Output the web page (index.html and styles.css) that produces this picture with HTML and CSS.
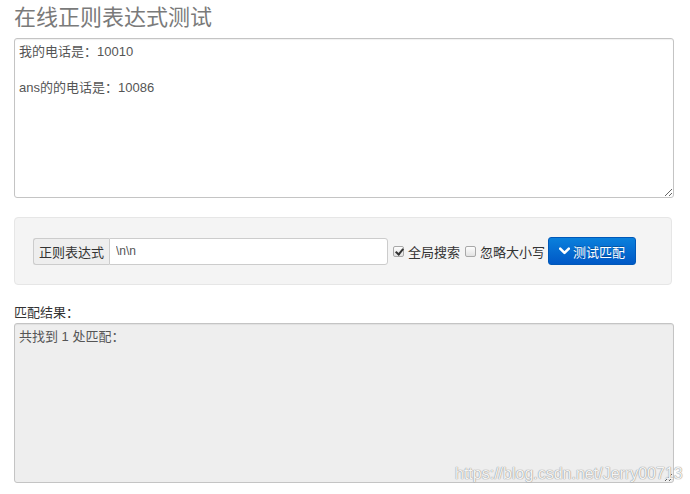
FILE: index.html
```html
<!DOCTYPE html>
<html lang="zh">
<head>
<meta charset="utf-8">
<title>在线正则表达式测试</title>
<link rel="stylesheet" href="styles.css">
</head>
<body>
<div class="page">
  <h1 class="title">在线正则表达式测试</h1>
  <textarea class="source">我的电话是：10010

ans的的电话是：10086</textarea>
  <div class="well">
    <div class="input-group">
      <span class="addon">正则表达式</span>
      <input class="regex" type="text" value="\n\n">
    </div>
    <label class="opt"><span class="cbox checked"></span>全局搜索</label>
    <label class="opt"><span class="cbox"></span>忽略大小写</label>
    <button class="btn" type="button"><svg class="chev" width="11" height="8" viewBox="0 0 11 8"><path d="M1.2 1.6 L5.5 5.9 L9.8 1.6" fill="none" stroke="#fff" stroke-width="2.6" stroke-linecap="round" stroke-linejoin="round"/></svg>测试匹配</button>
  </div>
  <div class="result-label">匹配结果：</div>
  <textarea class="result" readonly>共找到 1 处匹配：</textarea>
</div>
<div class="watermark">https://blog.csdn.net/Jerry00713</div>
</body>
</html>
```
FILE: styles.css
```css
html, body {
  margin: 0;
  padding: 0;
  background: #fff;
}
body {
  font-family: "Liberation Sans", "Noto Sans CJK SC", sans-serif;
  font-size: 13px;
  color: #333;
  position: relative;
  height: 494px;
  overflow: hidden;
}
.page {
  width: 660px;
  padding: 0 14px;
  display: flex;
  flex-direction: column;
}
.title {
  margin: 3px 0 5px;
  font-size: 22px;
  line-height: 30px;
  font-weight: normal;
  color: #7a7a7a;
}
textarea {
  box-sizing: border-box;
  width: 660px;
  height: 160px;
  margin: 0;
  padding: 4px;
  border: 1px solid #c4c4c4;
  border-radius: 3px;
  font-family: "Liberation Sans", "Noto Sans CJK SC", sans-serif;
  font-size: 13px;
  line-height: 18px;
  color: #555;
  background: #fff;
  box-shadow: inset 0 1px 1px rgba(0,0,0,0.06);
  outline: none;
  display: block;
}
.well {
  margin-top: 19px;
  width: 658px;
  box-sizing: border-box;
  height: 68px;
  padding: 0 18px;
  background: #f4f4f4;
  border: 1px solid #e6e6e6;
  border-radius: 4px;
  display: flex;
  align-items: center;
}
.input-group {
  display: flex;
  height: 27px;
}
.addon {
  box-sizing: border-box;
  width: 76px;
  display: flex;
  align-items: center;
  justify-content: center;
  background: #eee;
  border: 1px solid #ccc;
  border-right: none;
  border-radius: 3px 0 0 3px;
  color: #333;
  font-size: 13px;
}
.regex {
  box-sizing: border-box;
  width: 279px;
  height: 27px;
  margin: 0;
  padding: 0 6px;
  border: 1px solid #ccc;
  border-radius: 0 3px 3px 0;
  font-family: "Liberation Sans Narrow", "Liberation Sans", sans-serif;
  font-size: 12px;
  color: #555;
  outline: none;
}
.opt {
  display: flex;
  align-items: center;
  margin-left: 5px;
  font-size: 13px;
  color: #333;
}
.cbox {
  box-sizing: border-box;
  width: 11px;
  height: 11px;
  margin-right: 4px;
  border: 1px solid #a8a8a8;
  border-radius: 2px;
  background: linear-gradient(#fdfdfd, #e2e2e2);
  position: relative;
}
.cbox.checked::after {
  content: "";
  position: absolute;
  left: 3px;
  top: 0px;
  width: 3px;
  height: 6px;
  border: solid #333;
  border-width: 0 2px 2px 0;
  transform: rotate(40deg);
}
.btn {
  margin-left: 3px;
  box-sizing: border-box;
  width: 88px;
  height: 28px;
  padding: 0;
  border: 1px solid #0058b8;
  border-radius: 3px;
  background: linear-gradient(#0a80dc, #0058c6);
  color: #fff;
  font-family: "Liberation Sans", "Noto Sans CJK SC", sans-serif;
  font-size: 13px;
  display: flex;
  align-items: center;
  justify-content: center;
  text-shadow: 0 -1px 0 rgba(0,0,0,0.25);
}
.chev {
  margin-right: 3px;
}
.result-label {
  margin-top: 19px;
  line-height: 18px;
  font-size: 13px;
  color: #333;
}
.result {
  margin-top: 1px;
  background: #eee;
}
.watermark {
  position: absolute;
  left: 455px;
  top: 465px;
  font-family: "Liberation Sans", sans-serif;
  font-size: 16px;
  color: rgba(255,255,255,0.92);
  text-shadow: 0 0 1px #888, 0 0 1px #999;
  white-space: nowrap;
}
```
